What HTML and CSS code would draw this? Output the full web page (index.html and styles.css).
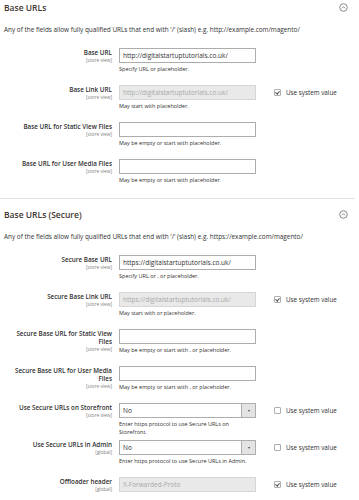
FILE: index.html
```html
<!DOCTYPE html>
<html lang="en">
<head>
    <meta charset="UTF-8">
    <meta name="viewport" content="width=device-width, initial-scale=1.0">
    <title>Base URLs</title>
    <link rel="stylesheet" href="styles.css">
</head>
<body>
    <div class="config">
        <div class="section section-first">
            <div class="section-head">
                <h2>Base URLs</h2>
                <svg class="collapse" width="9" height="9" viewBox="0 0 9 9"><circle cx="4.5" cy="4.5" r="3.8" fill="none" stroke="#6f6f6f" stroke-width="0.8"/><path d="M2.9 5.3 L4.5 3.7 L6.1 5.3" fill="none" stroke="#6f6f6f" stroke-width="0.8"/></svg>
            </div>
            <p class="section-desc">Any of the fields allow fully qualified URLs that end with '/' (slash) e.g. http://example.com/magento/</p>

            <div class="row">
                <div class="label">Base URL<span class="scope">[store view]</span></div>
                <div class="control">
                    <input type="text" value="http://digitalstartuptutorials.co.uk/">
                    <div class="hint">Specify URL or placeholder.</div>
                </div>
            </div>
            <div class="row">
                <div class="label">Base Link URL<span class="scope">[store view]</span></div>
                <div class="control">
                    <input type="text" value="http://digitalstartuptutorials.co.uk/" disabled>
                    <div class="hint">May start with placeholder.</div>
                </div>
                <label class="system"><span class="check checked"></span>Use system value</label>
            </div>
            <div class="row">
                <div class="label">Base URL for Static View Files<span class="scope">[store view]</span></div>
                <div class="control">
                    <input type="text" value="">
                    <div class="hint">May be empty or start with placeholder.</div>
                </div>
            </div>
            <div class="row">
                <div class="label">Base URL for User Media Files<span class="scope">[store view]</span></div>
                <div class="control">
                    <input type="text" value="">
                    <div class="hint">May be empty or start with placeholder.</div>
                </div>
            </div>
        </div>

        <div class="section">
            <div class="section-head">
                <h2>Base URLs (Secure)</h2>
                <svg class="collapse" width="9" height="9" viewBox="0 0 9 9"><circle cx="4.5" cy="4.5" r="3.8" fill="none" stroke="#6f6f6f" stroke-width="0.8"/><path d="M2.9 5.3 L4.5 3.7 L6.1 5.3" fill="none" stroke="#6f6f6f" stroke-width="0.8"/></svg>
            </div>
            <p class="section-desc">Any of the fields allow fully qualified URLs that end with '/' (slash) e.g. https://example.com/magento/</p>

            <div class="row">
                <div class="label">Secure Base URL<span class="scope">[store view]</span></div>
                <div class="control">
                    <input type="text" value="https://digitalstartuptutorials.co.uk/">
                    <div class="hint">Specify URL or , or placeholder.</div>
                </div>
            </div>
            <div class="row">
                <div class="label">Secure Base Link URL<span class="scope">[store view]</span></div>
                <div class="control">
                    <input type="text" value="https://digitalstartuptutorials.co.uk/" disabled>
                    <div class="hint">May start with or placeholder.</div>
                </div>
                <label class="system"><span class="check checked"></span>Use system value</label>
            </div>
            <div class="row">
                <div class="label">Secure Base URL for Static View Files<span class="scope">[store view]</span></div>
                <div class="control">
                    <input type="text" value="">
                    <div class="hint">May be empty or start with , or placeholder.</div>
                </div>
            </div>
            <div class="row">
                <div class="label">Secure Base URL for User Media Files<span class="scope">[store view]</span></div>
                <div class="control">
                    <input type="text" value="">
                    <div class="hint">May be empty or start with , or placeholder.</div>
                </div>
            </div>
            <div class="row">
                <div class="label">Use Secure URLs on Storefront<span class="scope">[store view]</span></div>
                <div class="control">
                    <div class="select"><span class="select-value">No</span><span class="select-arrow">&#9662;</span></div>
                    <div class="hint">Enter https protocol to use Secure URLs on Storefront.</div>
                </div>
                <label class="system"><span class="check"></span>Use system value</label>
            </div>
            <div class="row">
                <div class="label">Use Secure URLs in Admin<span class="scope">[global]</span></div>
                <div class="control">
                    <div class="select"><span class="select-value">No</span><span class="select-arrow">&#9662;</span></div>
                    <div class="hint">Enter https protocol to use Secure URLs in Admin.</div>
                </div>
                <label class="system"><span class="check"></span>Use system value</label>
            </div>
            <div class="row">
                <div class="label">Offloader header<span class="scope">[global]</span></div>
                <div class="control">
                    <input type="text" value="X-Forwarded-Proto" disabled>
                </div>
                <label class="system"><span class="check checked"></span>Use system value</label>
            </div>
        </div>
    </div>
</body>
</html>
```

FILE: styles.css
```css
body {
    margin: 0;
    padding: 0;
    background-color: #fff;
    font-family: "Open Sans", "Liberation Sans", sans-serif;
    color: #303030;
}
.config {
    width: 355px;
}
.section {
    border-top: 1px solid #e3e3e3;
    padding-bottom: 2px;
}
.section-first {
    border-top: none;
}
.section-head {
    display: flex;
    justify-content: space-between;
    align-items: center;
    height: 14px;
    padding: 8px 7px 0 4px;
}
.section-first .section-head {
    padding-top: 0;
}
.section-head h2 {
    margin: 0;
    font-size: 8.5px;
    font-weight: 600;
    color: #41362f;
}
.collapse {
    display: block;
}
.section-desc {
    margin: 12px 0 14px 4px;
    font-size: 6.4px;
    line-height: 8px;
    white-space: nowrap;
}
.row {
    display: grid;
    grid-template-columns: 98px 137px auto;
    column-gap: 7px;
    padding-left: 14px;
    min-height: 37px;
    align-items: start;
}
.label {
    text-align: right;
    font-size: 6.3px;
    font-weight: 600;
    line-height: 8px;
    padding-top: 1px;
}
.scope {
    display: block;
    font-size: 4.8px;
    font-weight: 400;
    line-height: 6px;
    color: #808080;
}
.control input {
    display: block;
    box-sizing: border-box;
    width: 100%;
    height: 15px;
    margin: 0;
    padding: 0 3px;
    border: 1px solid #adadad;
    border-radius: 0;
    font-family: inherit;
    font-size: 6.5px;
    color: #303030;
    background-color: #fff;
}
.control input:disabled {
    background-color: #e9e9e9;
    border-color: #d6d6d6;
    color: #a8a8a8;
}
.hint {
    margin-top: 3px;
    font-size: 5.5px;
    line-height: 7.5px;
}
.select {
    display: flex;
    box-sizing: border-box;
    height: 15px;
    border: 1px solid #adadad;
    font-size: 6.5px;
}
.select-value {
    flex: 1;
    padding-left: 3px;
    line-height: 13px;
}
.select-arrow {
    width: 13px;
    background-color: #e3e3e3;
    border-left: 1px solid #adadad;
    text-align: center;
    font-size: 4px;
    line-height: 13px;
    color: #514943;
}
.system {
    display: flex;
    align-items: center;
    height: 15px;
    margin-left: 11px;
    font-size: 6.3px;
    white-space: nowrap;
}
.check {
    box-sizing: border-box;
    width: 7px;
    height: 7px;
    margin-right: 5px;
    border: 1px solid #adadad;
    border-radius: 1px;
    background-color: #fff;
    position: relative;
}
.check.checked::after {
    content: "";
    position: absolute;
    left: 1.2px;
    top: 0.2px;
    width: 1.6px;
    height: 3.2px;
    border-right: 1px solid #514943;
    border-bottom: 1px solid #514943;
    transform: rotate(40deg);
}
```
